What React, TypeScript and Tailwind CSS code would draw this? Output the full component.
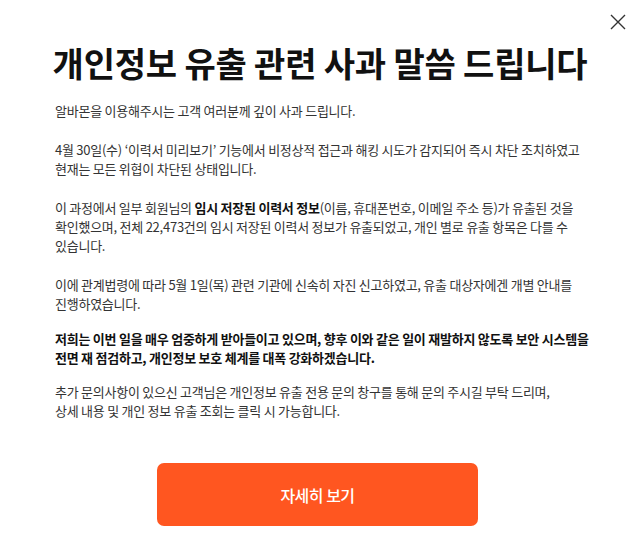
import React from "react";

export default function App() {
  return (
    <div
      className="relative w-[640px] h-[547px] bg-white text-[#333]"
      style={{ fontFamily: '"Noto Sans CJK KR", "Noto Sans", sans-serif' }}
    >
      {/* close */}
      <button className="absolute top-[13px] right-[13px] w-[18px] h-[18px] flex items-center justify-center">
        <svg width="16" height="16" viewBox="0 0 16 16" fill="none">
          <path d="M1 1L15 15M15 1L1 15" stroke="#333" strokeWidth="1.4" />
        </svg>
      </button>

      <div className="pt-[42px]">
        <h1 className="text-center text-[34px] leading-[42px] font-bold text-[#111] tracking-[-0.2px]">
          개인정보 유출 관련 사과 말씀 드립니다
        </h1>
      </div>

      <div className="mt-[17px] pl-[55px] pr-[20px] text-[13px] leading-[19px] tracking-[-0.25px] whitespace-nowrap">
        <p>알바몬을 이용해주시는 고객 여러분께 깊이 사과 드립니다.</p>
        <p className="mt-[20px]">
          4월 30일(수) ‘이력서 미리보기’ 기능에서 비정상적 접근과 해킹 시도가 감지되어 즉시 차단 조치하였고
          <br />
          현재는 모든 위협이 차단된 상태입니다.
        </p>
        <p className="mt-[20px]">
          이 과정에서 일부 회원님의 <b className="font-bold text-[#111]">임시 저장된 이력서 정보</b>(이름, 휴대폰번호, 이메일 주소 등)가 유출된 것을
          <br />
          확인했으며, 전체 22,473건의 임시 저장된 이력서 정보가 유출되었고, 개인 별로 유출 항목은 다를 수
          <br />
          있습니다.
        </p>
        <p className="mt-[20px]">
          이에 관계법령에 따라 5월 1일(목) 관련 기관에 신속히 자진 신고하였고, 유출 대상자에겐 개별 안내를
          <br />
          진행하였습니다.
        </p>
        <p className="mt-[16px] font-bold text-[#111]">
          저희는 이번 일을 매우 엄중하게 받아들이고 있으며, 향후 이와 같은 일이 재발하지 않도록 보안 시스템을
          <br />
          전면 재 점검하고, 개인정보 보호 체계를 대폭 강화하겠습니다.
        </p>
        <p className="mt-[15px]">
          추가 문의사항이 있으신 고객님은 개인정보 유출 전용 문의 창구를 통해 문의 주시길 부탁 드리며,
          <br />
          상세 내용 및 개인 정보 유출 조회는 클릭 시 가능합니다.
        </p>
      </div>

      <button className="mt-[43px] ml-[157px] w-[321px] h-[63px] rounded-[7px] bg-[#ff5620] text-white text-[16px] font-medium tracking-[-0.5px]">
        자세히 보기
      </button>
    </div>
  );
}
